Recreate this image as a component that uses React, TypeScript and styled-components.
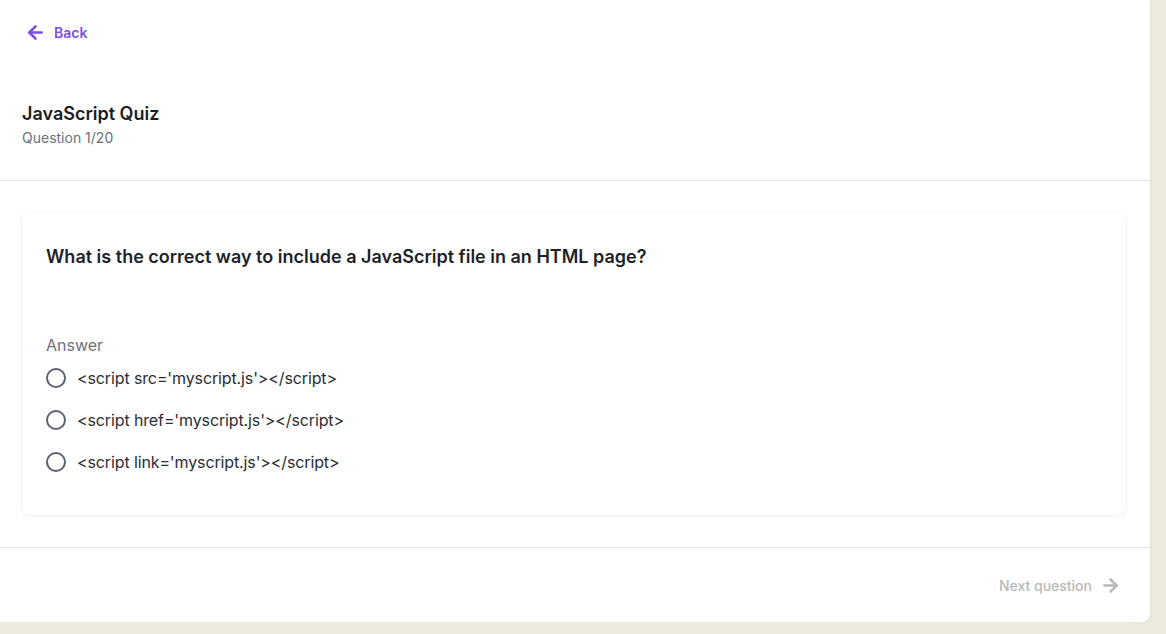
import React from "react";
import styled, { createGlobalStyle } from "styled-components";
import { ArrowLeft, ArrowRight } from "lucide-react";

const Global = createGlobalStyle`
  html, body { margin: 0; padding: 0; }
  body {
    background: #ece9dd;
    font-family: Inter, "Noto Sans", Roboto, sans-serif;
    -webkit-font-smoothing: antialiased;
  }
`;

const Panel = styled.div`
  width: 1150px;
  height: 622px;
  background: #ffffff;
  border-bottom-right-radius: 8px;
  box-shadow: 0 1px 3px rgba(0, 0, 0, 0.08);
  display: flex;
  flex-direction: column;
  box-sizing: border-box;
`;

const Header = styled.header`
  padding: 24px 22px 32px;
  border-bottom: 1px solid #e3e3e3;
  display: flex;
  flex-direction: column;
`;

const BackLink = styled.a`
  display: flex;
  align-items: center;
  gap: 8px;
  height: 16px;
  margin-left: 3px;
  color: #7a4fe0;
  font-size: 14px;
  font-weight: 600;
  text-decoration: none;
  cursor: pointer;
`;

const Title = styled.h1`
  margin: 62px 0 0;
  font-size: 18px;
  line-height: 24px;
  font-weight: 600;
  color: #1b1c24;
`;

const Subtitle = styled.div`
  margin-top: 2px;
  font-size: 14px;
  line-height: 20px;
  color: #6b717e;
`;

const Main = styled.main`
  padding: 31px 24px 32px 22px;
  border-bottom: 1px solid #e3e3e3;
`;

const Card = styled.section`
  border-radius: 8px;
  box-shadow: 0 0 0 1px rgba(0, 0, 0, 0.025), 0 1px 4px rgba(0, 0, 0, 0.05);
  padding: 33px 24px 38px;
  display: flex;
  flex-direction: column;
`;

const Question = styled.h2`
  margin: 0;
  font-size: 18px;
  line-height: 24px;
  font-weight: 600;
  color: #1d1f2a;
`;

const AnswerLabel = styled.div`
  margin-top: 64px;
  font-size: 16px;
  line-height: 24px;
  color: #6b717e;
`;

const Options = styled.div`
  margin-top: 6px;
  display: flex;
  flex-direction: column;
  gap: 12px;
`;

const Option = styled.label`
  display: flex;
  align-items: center;
  gap: 11px;
  height: 30px;
  font-size: 16px;
  letter-spacing: -0.12px;
  color: #2b2d36;
  cursor: pointer;
`;

const Radio = styled.span`
  width: 16px;
  height: 16px;
  border: 2px solid #5c6270;
  border-radius: 50%;
  flex: none;
`;

const Footer = styled.footer`
  flex: 1;
  display: flex;
  justify-content: flex-end;
  align-items: flex-start;
  padding: 27px 29px 0 0;
`;

const NextButton = styled.button`
  display: flex;
  align-items: center;
  gap: 8px;
  border: none;
  background: none;
  padding: 0;
  height: 20px;
  font-family: inherit;
  font-size: 14px;
  font-weight: 500;
  color: #b9b9b9;
  cursor: default;
`;

const options = [
  "<script src='myscript.js'></script>",
  "<script href='myscript.js'></script>",
  "<script link='myscript.js'></script>",
];

export default function App() {
  return (
    <>
      <Global />
      <Panel>
        <Header>
          <BackLink>
            <ArrowLeft size={21} strokeWidth={3} />
            Back
          </BackLink>
          <Title>JavaScript Quiz</Title>
          <Subtitle>Question 1/20</Subtitle>
        </Header>
        <Main>
          <Card>
            <Question>
              What is the correct way to include a JavaScript file in an HTML page?
            </Question>
            <AnswerLabel>Answer</AnswerLabel>
            <Options>
              {options.map((o) => (
                <Option key={o}>
                  <Radio />
                  {o}
                </Option>
              ))}
            </Options>
          </Card>
        </Main>
        <Footer>
          <NextButton disabled>
            Next question
            <ArrowRight size={21} strokeWidth={3} />
          </NextButton>
        </Footer>
      </Panel>
    </>
  );
}
